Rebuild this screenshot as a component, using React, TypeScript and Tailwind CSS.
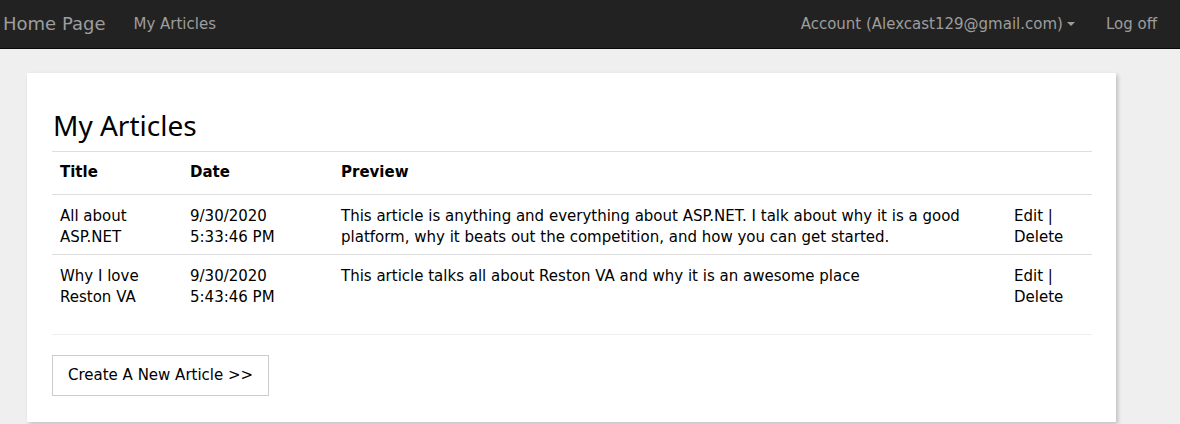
import React from "react";

const rows = [
  {
    title: "All about ASP.NET",
    date: ["9/30/2020", "5:33:46 PM"],
    preview:
      "This article is anything and everything about ASP.NET. I talk about why it is a good platform, why it beats out the competition, and how you can get started.",
  },
  {
    title: "Why I love Reston VA",
    date: ["9/30/2020", "5:43:46 PM"],
    preview: "This article talks all about Reston VA and why it is an awesome place",
  },
];

export default function App() {
  return (
    <div
      className="min-h-[424px] bg-[#efefef] text-black"
      style={{ fontFamily: "'DejaVu Sans', Verdana, sans-serif" }}
    >
      <nav className="h-[49px] bg-[#222222] border-b border-[#080808] flex items-center text-[#9d9d9d]">
        <a className="pl-[3px] text-[18px] leading-[20px] pr-[28px]">Home Page</a>
        <a className="text-[15px] leading-[20px]">My Articles</a>
        <div className="ml-auto flex items-center">
          <a className="text-[15px] leading-[20px] flex items-center">
            Account (Alexcast129@gmail.com)
            <span className="ml-[4px] inline-block w-0 h-0 border-l-[4px] border-r-[4px] border-t-[4px] border-l-transparent border-r-transparent border-t-[#9d9d9d]" />
          </a>
          <a className="text-[15px] leading-[20px] ml-[31px] mr-[23px]">Log off</a>
        </div>
      </nav>

      <div className="ml-[27px] mt-[24px] w-[1089px] bg-white shadow-[2px_2px_4px_rgba(0,0,0,0.2)] pl-[25px] pr-[24px] pt-[36px] pb-[26px]">
        <h2 className="text-[28px] leading-[33px] pb-[9px] pl-[1px]" style={{ fontFamily: "'Noto Sans', sans-serif" }}>
          My Articles
        </h2>
        <table className="w-full border-collapse text-[15px] leading-[21px]">
          <colgroup>
            <col className="w-[130px]" />
            <col className="w-[151px]" />
            <col className="w-[673px]" />
            <col />
          </colgroup>
          <thead>
            <tr className="border-t border-b border-[#dddddd]">
              <th className="text-left font-bold px-[8px] pt-[10px] pb-[11px]">Title</th>
              <th className="text-left font-bold px-[8px] pt-[10px] pb-[11px]">Date</th>
              <th className="text-left font-bold px-[8px] pt-[10px] pb-[11px]">Preview</th>
              <th className="px-[8px]"></th>
            </tr>
          </thead>
          <tbody>
            {rows.map((r, i) => (
              <tr key={i} className={i === 0 ? "border-b border-[#dddddd]" : ""}>
                <td className="align-top px-[8px] pt-[11px] pb-[6px]">{r.title}</td>
                <td className="align-top px-[8px] pt-[11px] pb-[6px]">
                  {r.date[0]}
                  <br />
                  {r.date[1]}
                </td>
                <td className="align-top px-[8px] pt-[11px] pb-[6px]">{r.preview}</td>
                <td className="align-top px-[8px] pt-[11px] pb-[6px]">
                  Edit |
                  <br />
                  Delete
                </td>
              </tr>
            ))}
          </tbody>
        </table>
        <hr className="mt-[20px] mb-[20px] border-0 border-t border-[#eeeeee]" />
        <button className="h-[41px] px-[15px] border border-[#cccccc] bg-white text-[15px] leading-[21px]">
          Create A New Article &gt;&gt;
        </button>
      </div>
    </div>
  );
}
